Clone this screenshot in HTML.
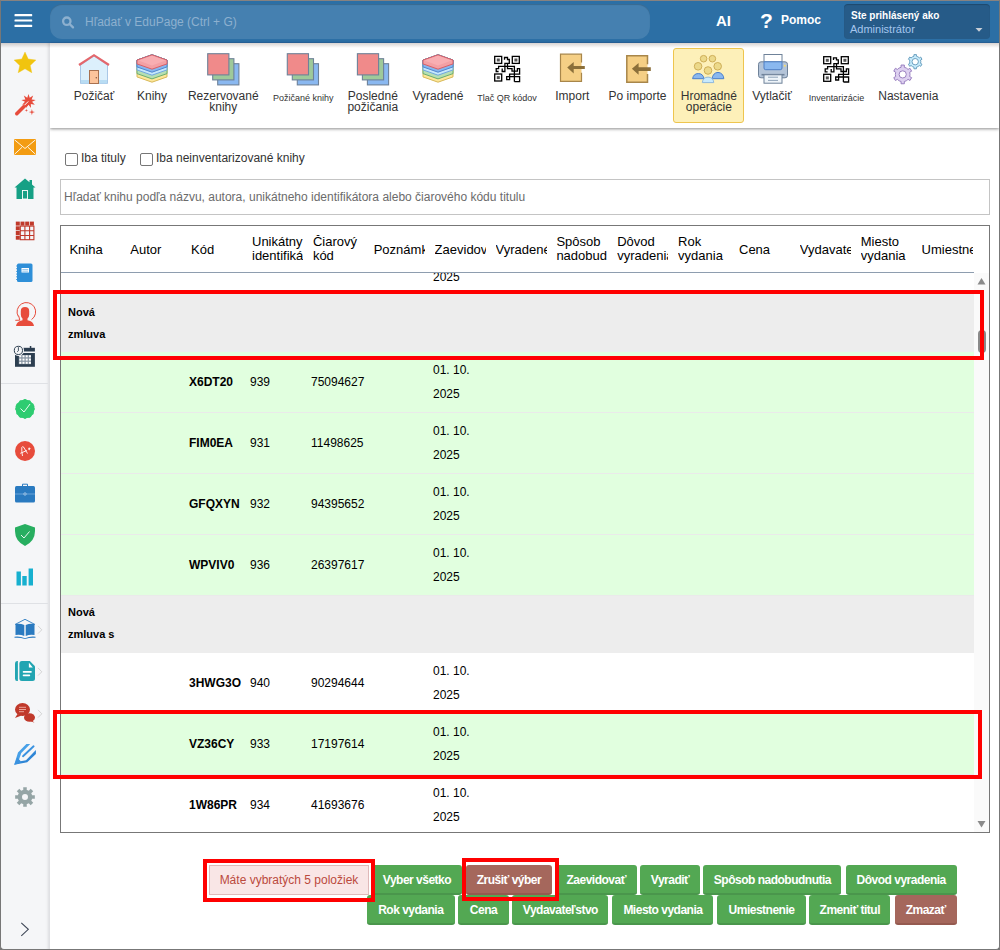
<!DOCTYPE html><html><head><meta charset="utf-8"><title>EduPage</title><style>
*{box-sizing:border-box}
html,body{margin:0;padding:0}
body{width:1000px;height:950px;overflow:hidden;position:relative;background:#fff;font-family:"Liberation Sans",sans-serif;color:#222}
.abs{position:absolute}
#frame{position:absolute;left:0;top:0;width:1000px;height:950px;border:1px solid #777;border-top-color:#878280;border-radius:0 0 4px 4px;z-index:50;pointer-events:none}
#hdr{position:absolute;left:0;top:0;width:1000px;height:43px;background:#2c6fa5;border-bottom:1px solid #2a67a0}
#srch{position:absolute;left:50px;top:4px;width:600px;height:35px;border-radius:12px;background:#4580b0;box-shadow:inset 0 1px 1px rgba(0,0,0,.18)}
#srch span{position:absolute;left:35px;top:11px;font-size:12px;color:#8db0cf;white-space:nowrap}
.hw{position:absolute;color:#fff;font-weight:bold;white-space:nowrap}
#user{position:absolute;left:844px;top:4px;width:146px;height:35px;border-radius:4px;background:#265b88;box-shadow:inset 0 1px 1px rgba(0,0,0,.2)}
#side{position:absolute;left:0;top:43px;width:50px;height:907px;background:#f5f6f8;box-shadow:inset -3px 0 3px -1px rgba(0,0,0,.10);z-index:5}
#sideedge{position:absolute;left:48px;top:43px;width:2px;height:907px;background:linear-gradient(90deg,#e6e7ea,#dedfe2);z-index:6}
.sep{position:absolute;left:1px;width:47px;height:1px;background:#dfe1e5;z-index:7}
#tb{position:absolute;left:50px;top:43px;width:949px;height:85px;background:#fff;box-shadow:0 1px 3px rgba(0,0,0,.45)}
#hdrsh{position:absolute;left:1px;top:43px;width:998px;height:5px;background:linear-gradient(rgba(60,40,30,.20),rgba(0,0,0,0));z-index:9}
.tl{position:absolute;top:91px;font-size:12px;line-height:11px;color:#333;text-align:center;white-space:nowrap}
.tls{position:absolute;top:92.5px;font-size:9px;line-height:10px;color:#333;text-align:center;white-space:nowrap}
#hl{position:absolute;left:673px;top:48px;width:71px;height:75px;background:#fdf0b9;border:1px solid #eec54e;border-radius:3px}
.cb{position:absolute;top:153px;width:13px;height:13px;border:1px solid #767676;border-radius:2px;background:#fff}
.cbl{position:absolute;top:151px;font-size:12px;color:#333;white-space:nowrap}
#inp{position:absolute;left:60px;top:179px;width:930px;height:36px;border:1px solid #c4c4c4;background:#fff}
#inp span{position:absolute;left:3px;top:10px;font-size:12px;color:#6b6b6b;white-space:nowrap}
#tbl{position:absolute;left:60px;top:225px;width:930px;height:608px;border:1px solid #777;background:#fff;overflow:hidden}
.th{position:absolute;font-size:13px;line-height:14px;color:#000;white-space:nowrap;overflow:hidden}
#thline{position:absolute;left:0;top:46px;width:913px;height:1px;background:#8e9daf}
#sb{position:absolute;left:913px;top:47px;width:15px;height:559px;background:#fafafa}
.row{position:absolute;left:0;width:913px}
.g{background:#ededed}
.gr{background:#e1ffdf}
.bd{border-bottom:1px solid #eaeaea}
.c{position:absolute;font-size:12px;color:#000;white-space:nowrap}
.b{font-weight:bold}
.rf{position:absolute;border:4px solid #ff0000;z-index:40}
.btn{position:absolute;height:30px;background:#53a853;border-bottom:2px solid #4a964c;border-radius:3px;color:#fff;font-weight:bold;font-size:12px;letter-spacing:-0.5px;line-height:30px;text-align:center;white-space:nowrap}
.br{background:#a5675c;border-bottom-color:#955a50}
#info{position:absolute;left:209px;top:865px;width:160px;height:30px;background:#f9e6e6;border:1px solid #dfb9b9;font-size:12px;line-height:28px;color:#bb4a3d;text-align:center;white-space:nowrap}
</style></head><body>
<div id="hdr"></div>
<div id="srch"><span>Hľadať v EduPage (Ctrl + G)</span></div>
<div class="hw" style="left:716px;top:12px;font-size:15px">AI</div>
<div class="hw" style="left:760px;top:9px;font-size:21px">?</div>
<div class="hw" style="left:781px;top:13px;font-size:12px">Pomoc</div>
<div id="user"></div>
<div class="hw" style="left:851px;top:10px;font-size:10px">Ste prihlásený ako</div>
<div class="hw" style="left:850px;top:23px;font-size:11px;font-weight:normal;color:#a5c6ee">Administrátor</div>
<div id="side"></div><div id="sideedge"></div>
<div class="sep" style="top:383px"></div><div class="sep" style="top:603px"></div>
<div id="tb"></div><div id="hdrsh"></div>
<div id="hl"></div>
<div class="tl" style="left:44px;width:100px">Požičať</div>
<div class="tl" style="left:102px;width:100px">Knihy</div>
<div class="tl" style="left:173.3px;width:100px">Rezervované<br>knihy</div>
<div class="tls" style="left:253.2px;width:100px">Požičané knihy</div>
<div class="tl" style="left:322.8px;width:100px">Posledné<br>požičania</div>
<div class="tl" style="left:388px;width:100px">Vyradené</div>
<div class="tls" style="left:457px;width:100px">Tlač QR kódov</div>
<div class="tl" style="left:522.3px;width:100px">Import</div>
<div class="tl" style="left:587.5px;width:100px">Po importe</div>
<div class="tl" style="left:658.8px;width:100px">Hromadné<br>operácie</div>
<div class="tl" style="left:722px;width:100px">Vytlačiť</div>
<div class="tls" style="left:786.5px;width:100px">Inventarizácie</div>
<div class="tl" style="left:858.3px;width:100px">Nastavenia</div>
<div class="cb" style="left:65px"></div><div class="cbl" style="left:81px">Iba tituly</div>
<div class="cb" style="left:140px"></div><div class="cbl" style="left:156px">Iba neinventarizované knihy</div>
<div id="inp"><span>Hľadať knihu podľa názvu, autora, unikátneho identifikátora alebo čiarového kódu titulu</span></div>
<div id="tbl">
<div class="th" style="left:8.4px;top:17px;width:51px">Kniha</div>
<div class="th" style="left:69.3px;top:17px;width:51px">Autor</div>
<div class="th" style="left:130.1px;top:17px;width:51px">Kód</div>
<div class="th" style="left:191.0px;top:9px;width:51px">Unikátny<br>identifikátor</div>
<div class="th" style="left:251.9px;top:9px;width:51px">Čiarový<br>kód</div>
<div class="th" style="left:312.7px;top:17px;width:51px">Poznámka</div>
<div class="th" style="left:373.6px;top:17px;width:51px">Zaevidované</div>
<div class="th" style="left:434.5px;top:17px;width:51px">Vyradené</div>
<div class="th" style="left:495.4px;top:9px;width:51px">Spôsob<br>nadobudnutia</div>
<div class="th" style="left:556.2px;top:9px;width:51px">Dôvod<br>vyradenia</div>
<div class="th" style="left:617.1px;top:9px;width:51px">Rok<br>vydania</div>
<div class="th" style="left:678.0px;top:17px;width:51px">Cena</div>
<div class="th" style="left:738.8px;top:17px;width:51px">Vydavateľstvo</div>
<div class="th" style="left:799.7px;top:9px;width:51px">Miesto<br>vydania</div>
<div class="th" style="left:860.6px;top:17px;width:51px">Umiestnenie</div>
<div id="thline"></div>
<div style="position:absolute;left:0;top:47px;width:913px;height:559px;overflow:hidden">
<div class="row" style="top:0px;height:21px"></div>
<div class="c" style="left:372px;top:-3px;line-height:14px">2025</div>
<div class="row g" style="top:21px;height:58px"></div>
<div class="c b" style="left:7px;top:28px;line-height:22px;font-size:11px">Nová<br>zmluva</div>
<div class="row gr bd" style="top:79px;height:61px"></div>
<div class="c b" style="left:128px;top:101px;line-height:16px">X6DT20</div>
<div class="c" style="left:189px;top:101px;line-height:16px">939</div>
<div class="c" style="left:250px;top:101px;line-height:16px">75094627</div>
<div class="c" style="left:372px;top:85px;line-height:24px">01. 10.<br>2025</div>
<div class="row gr bd" style="top:140px;height:61px"></div>
<div class="c b" style="left:128px;top:162px;line-height:16px">FIM0EA</div>
<div class="c" style="left:189px;top:162px;line-height:16px">931</div>
<div class="c" style="left:250px;top:162px;line-height:16px">11498625</div>
<div class="c" style="left:372px;top:146px;line-height:24px">01. 10.<br>2025</div>
<div class="row gr bd" style="top:201px;height:61px"></div>
<div class="c b" style="left:128px;top:223px;line-height:16px">GFQXYN</div>
<div class="c" style="left:189px;top:223px;line-height:16px">932</div>
<div class="c" style="left:250px;top:223px;line-height:16px">94395652</div>
<div class="c" style="left:372px;top:207px;line-height:24px">01. 10.<br>2025</div>
<div class="row gr bd" style="top:262px;height:61px"></div>
<div class="c b" style="left:128px;top:284px;line-height:16px">WPVIV0</div>
<div class="c" style="left:189px;top:284px;line-height:16px">936</div>
<div class="c" style="left:250px;top:284px;line-height:16px">26397617</div>
<div class="c" style="left:372px;top:268px;line-height:24px">01. 10.<br>2025</div>
<div class="row g" style="top:323px;height:57px"></div>
<div class="c b" style="left:7px;top:328px;line-height:22px;font-size:11px">Nová<br>zmluva s</div>
<div class="row  bd" style="top:380px;height:61px"></div>
<div class="c b" style="left:128px;top:402px;line-height:16px">3HWG3O</div>
<div class="c" style="left:189px;top:402px;line-height:16px">940</div>
<div class="c" style="left:250px;top:402px;line-height:16px">90294644</div>
<div class="c" style="left:372px;top:386px;line-height:24px">01. 10.<br>2025</div>
<div class="row gr bd" style="top:441px;height:61px"></div>
<div class="c b" style="left:128px;top:463px;line-height:16px">VZ36CY</div>
<div class="c" style="left:189px;top:463px;line-height:16px">933</div>
<div class="c" style="left:250px;top:463px;line-height:16px">17197614</div>
<div class="c" style="left:372px;top:447px;line-height:24px">01. 10.<br>2025</div>
<div class="row  bd" style="top:502px;height:61px"></div>
<div class="c b" style="left:128px;top:524px;line-height:16px">1W86PR</div>
<div class="c" style="left:189px;top:524px;line-height:16px">934</div>
<div class="c" style="left:250px;top:524px;line-height:16px">41693676</div>
<div class="c" style="left:372px;top:508px;line-height:24px">01. 10.<br>2025</div>
</div>
<div id="sb"></div>
<svg class="abs" style="left:913px;top:47px" width="15" height="559"><path d="M3.5 11.5 L7.5 5 L11.5 11.5Z" fill="#8a8a8a"/><rect x="4" y="57" width="8" height="23" rx="4" fill="#8a8a8a"/><path d="M3.5 548 L11.5 548 L7.5 554.5Z" fill="#8a8a8a"/></svg>
</div>
<div class="rf" style="left:53px;top:290px;width:931px;height:70px"></div>
<div class="rf" style="left:53px;top:710px;width:929px;height:69px"></div>
<div id="info">Máte vybratých 5 položiek</div>
<div class="btn " style="left:372.0px;top:865px;width:90.0px">Vyber všetko</div>
<div class="btn br" style="left:466.0px;top:865px;width:86.0px">Zrušiť výber</div>
<div class="btn " style="left:556.0px;top:865px;width:80.5px">Zaevidovať</div>
<div class="btn " style="left:640.3px;top:865px;width:59.6px">Vyradiť</div>
<div class="btn " style="left:703.4px;top:865px;width:138.0px">Spôsob nadobudnutia</div>
<div class="btn " style="left:845.6px;top:865px;width:111.2px">Dôvod vyradenia</div>
<div class="btn " style="left:367.0px;top:895px;width:87.6px">Rok vydania</div>
<div class="btn " style="left:458.0px;top:895px;width:51.0px">Cena</div>
<div class="btn " style="left:512.4px;top:895px;width:96.0px">Vydavateľstvo</div>
<div class="btn " style="left:612.4px;top:895px;width:101.0px">Miesto vydania</div>
<div class="btn " style="left:717.4px;top:895px;width:88.2px">Umiestnenie</div>
<div class="btn " style="left:809.2px;top:895px;width:81.2px">Zmeniť titul</div>
<div class="btn br" style="left:894.6px;top:895px;width:62.2px">Zmazať</div>
<div class="rf" style="left:203px;top:859px;width:172px;height:43px"></div>
<div class="rf" style="left:462px;top:858px;width:97px;height:43px"></div>
<svg class="abs" style="left:0;top:0;z-index:30;pointer-events:none" width="1000" height="950" viewBox="0 0 1000 950"><g fill="#fff"><rect x="14.5" y="14.1" width="17.7" height="2.2" rx="0.6"/><rect x="14.5" y="19.4" width="17.7" height="2.2" rx="0.6"/><rect x="14.5" y="24.8" width="17.7" height="2.2" rx="0.6"/></g><g stroke="#8db0cf" fill="none" stroke-width="2.3"><circle cx="66.8" cy="21.2" r="3.7"/><path d="M69.6 24 L73 27.4" stroke-linecap="round"/></g><path d="M975.5 28 L982.5 28 L979 31.8Z" fill="#c9cfd6"/><g><path d="M80.5 65 L94 56 L107.5 65 L107.5 83.5 L80.5 83.5Z" fill="#dcf0fc" stroke="#a9c7e6" stroke-width="1"/><rect x="81" y="80" width="26" height="3.5" fill="#b8dcf3"/><path d="M79 65 L94 55.2 L109 65" fill="none" stroke="#e4676c" stroke-width="2.2"/><rect x="89.5" y="70.5" width="9" height="13" fill="#fcc49b" stroke="#a8714f" stroke-width="1"/><circle cx="96.3" cy="77.7" r="0.7" fill="#7a5038"/></g><path d="M137 60.099999999999994 L152 54.8 L167 60.099999999999994 L167 76.9 L152 82.2 L137 76.9Z" fill="#fde79a" stroke="#d8b95a" stroke-width="1"/><path d="M137 60.099999999999994 L152 54.8 L167 60.099999999999994 L167 73.6 L152 78.89999999999999 L137 73.6Z" fill="#b6dfb2" stroke="#6aaf70" stroke-width="1"/><path d="M137 60.099999999999994 L152 54.8 L167 60.099999999999994 L167 69.9 L152 75.2 L137 69.9Z" fill="#c6e8fc" stroke="#6fa6df" stroke-width="1"/><path d="M137 60.099999999999994 L152 54.8 L167 60.099999999999994 L167 66.9 L152 72.2 L137 66.9Z" fill="#85b7f0" stroke="#5186d0" stroke-width="1"/><path d="M137 60.099999999999994 L152 54.8 L167 60.099999999999994 L167 63.9 L152 69.2 L137 63.9Z" fill="#f3a0a4" stroke="#d85e66" stroke-width="1"/><path d="M138.5 60.4 L152 55.8 L165.5 60.4 L152 65.6Z" fill="#f8aeb2"/><path d="M423 60.099999999999994 L438 54.8 L453 60.099999999999994 L453 76.9 L438 82.2 L423 76.9Z" fill="#fde79a" stroke="#d8b95a" stroke-width="1"/><path d="M423 60.099999999999994 L438 54.8 L453 60.099999999999994 L453 73.6 L438 78.89999999999999 L423 73.6Z" fill="#b6dfb2" stroke="#6aaf70" stroke-width="1"/><path d="M423 60.099999999999994 L438 54.8 L453 60.099999999999994 L453 69.9 L438 75.2 L423 69.9Z" fill="#c6e8fc" stroke="#6fa6df" stroke-width="1"/><path d="M423 60.099999999999994 L438 54.8 L453 60.099999999999994 L453 66.9 L438 72.2 L423 66.9Z" fill="#85b7f0" stroke="#5186d0" stroke-width="1"/><path d="M423 60.099999999999994 L438 54.8 L453 60.099999999999994 L453 63.9 L438 69.2 L423 63.9Z" fill="#f3a0a4" stroke="#d85e66" stroke-width="1"/><path d="M424.5 60.4 L438 55.8 L451.5 60.4 L438 65.6Z" fill="#f8aeb2"/><rect x="217.7" y="63.7" width="21.2" height="21.2" fill="#8ab8f0" stroke="#6e8299" stroke-width="1.1"/><rect x="212.7" y="58.7" width="21.2" height="21.2" fill="#9ec99a" stroke="#6e8299" stroke-width="1.1"/><rect x="207.7" y="53.7" width="21.2" height="21.2" fill="#f08a8a" stroke="#6e8299" stroke-width="1.1"/><rect x="297.3" y="63.7" width="21.2" height="21.2" fill="#8ab8f0" stroke="#6e8299" stroke-width="1.1"/><rect x="292.3" y="58.7" width="21.2" height="21.2" fill="#9ec99a" stroke="#6e8299" stroke-width="1.1"/><rect x="287.3" y="53.7" width="21.2" height="21.2" fill="#f08a8a" stroke="#6e8299" stroke-width="1.1"/><rect x="367.4" y="63.7" width="21.2" height="21.2" fill="#8ab8f0" stroke="#6e8299" stroke-width="1.1"/><rect x="362.4" y="58.7" width="21.2" height="21.2" fill="#9ec99a" stroke="#6e8299" stroke-width="1.1"/><rect x="357.4" y="53.7" width="21.2" height="21.2" fill="#f08a8a" stroke="#6e8299" stroke-width="1.1"/><g transform="translate(494,55.7)"><g fill="none" stroke="#000" stroke-width="1.3"><rect x="0.7" y="0.7" width="7" height="7"/><rect x="18.3" y="0.7" width="7" height="7"/><rect x="0.7" y="18.3" width="7" height="7"/><path d="M10.5 4 V1.8 H13.5 V3.8 H15.3 V7.7 H10.9 V15.8 H8.2 V12.9"/><path d="M4.6 15.8 H2.2 V12.9 H4.6 V10.7 H20.4 V26"/><path d="M13.5 7.7 V12.9 H18 V15.5 H23.4 V12.9 H25.6 V18.4 H15.6 V24 H12.7 V21 H25.6 V26 H20.4"/></g><g fill="#555"><rect x="2.8" y="2.8" width="3" height="3"/><rect x="20.4" y="2.8" width="3" height="3"/><rect x="2.8" y="20.4" width="3" height="3"/></g></g><g transform="translate(823,56)"><g fill="none" stroke="#000" stroke-width="1.3"><rect x="0.7" y="0.7" width="7" height="7"/><rect x="18.3" y="0.7" width="7" height="7"/><rect x="0.7" y="18.3" width="7" height="7"/><path d="M10.5 4 V1.8 H13.5 V3.8 H15.3 V7.7 H10.9 V15.8 H8.2 V12.9"/><path d="M4.6 15.8 H2.2 V12.9 H4.6 V10.7 H20.4 V26"/><path d="M13.5 7.7 V12.9 H18 V15.5 H23.4 V12.9 H25.6 V18.4 H15.6 V24 H12.7 V21 H25.6 V26 H20.4"/></g><g fill="#555"><rect x="2.8" y="2.8" width="3" height="3"/><rect x="20.4" y="2.8" width="3" height="3"/><rect x="2.8" y="20.4" width="3" height="3"/></g></g><g><path d="M581.5 62.5 V54.2 H560.5 V81.4 H581.5 V72.8" fill="#f5cf85" stroke="#a8864a" stroke-width="1.2"/><path d="M567.2 67.6 L573.7 61.9 L573.7 66.1 H584.8 V69 H573.7 L573.7 73.5Z" fill="#8b6f3a"/></g><g><path d="M647.5 64.2 V55.8 H626.8 V82.2 H647.5 V74.1" fill="#f5cf85" stroke="#a8864a" stroke-width="1.5"/><path d="M631.9 68.8 L638.6 63 L638.6 67.2 H650.8 V71 H638.6 L638.6 74.7Z" fill="#8b6f3a"/></g><g stroke="#c9a850" stroke-width="0.9" fill="#ecd98a"><circle cx="703.6" cy="58.7" r="3.3"/><circle cx="712.4" cy="58.7" r="3.3"/><circle cx="698.1" cy="66.3" r="3.8"/><circle cx="717.7" cy="66.3" r="3.8"/><circle cx="708" cy="70.5" r="3.8"/></g><g stroke-width="1"><path d="M692.6 78.7 A5.8 6.3 0 0 1 704 78.7Z" fill="#8ab8ef" stroke="#4a7fcc"/><path d="M712.2 78.7 A5.8 6.3 0 0 1 723.8 78.7Z" fill="#8ab8ef" stroke="#4a7fcc"/><path d="M702.3 82.6 A5.8 6.3 0 0 1 713.8 82.6Z" fill="#c8eafe" stroke="#8fb8dd"/></g><g stroke="#6f8299" stroke-width="1"><rect x="764" y="54.5" width="18" height="8" fill="#fff"/><rect x="758.5" y="61.8" width="29" height="16" rx="2.5" fill="#b4c4d8"/><path d="M764 61.8 H782 V68 Q782 69.7 780.3 69.7 H765.7 Q764 69.7 764 68Z" fill="#8ab8ef" stroke="#4f7fc4"/><path d="M761.5 74.7 H784.5" stroke-width="1.6"/><rect x="764" y="74.8" width="18" height="8.4" fill="#eef4f9"/><path d="M768 77.2 H778 M768 80.4 H778" stroke="#8fa3b8" stroke-width="1"/></g><circle cx="784.8" cy="65.7" r="1" fill="#f5dc6a"/><path d="M899.20 67.99 L901.11 67.28 L901.04 65.05 L904.36 65.05 L904.29 67.28 L906.20 67.99 L906.50 68.17 L908.07 69.46 L909.97 68.28 L911.63 71.16 L909.67 72.22 L910.00 74.23 L910.00 74.57 L909.67 76.58 L911.63 77.64 L909.97 80.52 L908.07 79.34 L906.50 80.63 L906.20 80.81 L904.29 81.52 L904.36 83.75 L901.04 83.75 L901.11 81.52 L899.20 80.81 L898.90 80.63 L897.33 79.34 L895.43 80.52 L893.77 77.64 L895.73 76.58 L895.40 74.57 L895.40 74.23 L895.73 72.22 L893.77 71.16 L895.43 68.28 L897.33 69.46 L898.90 68.17Z M906.3000000000001 74.4 A3.6 3.6 0 1 0 899.1 74.4 A3.6 3.6 0 1 0 906.3000000000001 74.4Z" fill="#ddd0f0" stroke="#9a80c0" stroke-width="1" fill-rule="evenodd"/><path d="M912.52 56.79 L913.98 56.23 L913.94 54.61 L916.46 54.61 L916.42 56.23 L917.88 56.79 L918.11 56.92 L919.32 57.91 L920.71 57.06 L921.97 59.25 L920.54 60.03 L920.80 61.57 L920.80 61.83 L920.54 63.37 L921.97 64.15 L920.71 66.34 L919.32 65.49 L918.11 66.48 L917.88 66.61 L916.42 67.17 L916.46 68.79 L913.94 68.79 L913.98 67.17 L912.52 66.61 L912.29 66.48 L911.08 65.49 L909.69 66.34 L908.43 64.15 L909.86 63.37 L909.60 61.83 L909.60 61.57 L909.86 60.03 L908.43 59.25 L909.69 57.06 L911.08 57.91 L912.29 56.92Z M918.4000000000001 61.7 A3.2 3.2 0 1 0 912.0 61.7 A3.2 3.2 0 1 0 918.4000000000001 61.7Z" fill="#c8ecfc" stroke="#6aa0c0" stroke-width="1" fill-rule="evenodd"/><path d="M25 52.1 L28.2 59 L35.9 60.1 L30.2 65.5 L31.8 72.7 L25 68.8 L18.2 72.7 L19.8 65.5 L14.1 60.1 L21.8 59Z" fill="#f1c40f" stroke="#f1c40f" stroke-width="0.4" stroke-linejoin="round"/><g fill="#e74c3c"><path d="M28.50 93.90 L29.73 97.82 L33.19 95.61 L31.62 99.40 L35.69 99.93 L32.05 101.83 L34.82 104.85 L30.81 103.96 L31.00 108.06 L28.50 104.80 L26.00 108.06 L26.19 103.96 L22.18 104.85 L24.95 101.83 L21.31 99.93 L25.38 99.40 L23.81 95.61 L27.27 97.82Z"/><path d="M15.5 112.5 L27 101 L29.5 103.5 L18 115 Q16.7 116.2 15.5 115 Q14.3 113.8 15.5 112.5Z"/><path d="M26.40 108.70 L26.75 110.05 L28.10 110.40 L26.75 110.75 L26.40 112.10 L26.05 110.75 L24.70 110.40 L26.05 110.05Z"/><path d="M31.90 109.00 L32.54 111.46 L35.00 112.10 L32.54 112.74 L31.90 115.20 L31.26 112.74 L28.80 112.10 L31.26 111.46Z"/></g><path d="M24.8 104.9 L28 101.7" stroke="#fff" stroke-width="1" stroke-linecap="round"/><g><rect x="14" y="139" width="22" height="16" fill="#f39c12"/><path d="M14.5 139.8 L25 148.5 L35.5 139.8 M14.5 154.3 L22 147.3 M35.5 154.3 L28 147.3" stroke="#fff" stroke-width="0.9" fill="none"/></g><g fill="#16a085"><path d="M14.5 187.5 L25 178.5 L29.5 182.3 V180 H32 V184.5 L35.5 187.5 H33.5 V199 H16.5 V187.5Z"/></g><rect x="22.5" y="190.5" width="5" height="8.5" fill="none" stroke="#fff" stroke-width="0.9"/><g fill="#c0392b"><rect x="15.8" y="221.6" width="4" height="4"/><rect x="15.8" y="226.3" width="4" height="4"/><rect x="15.8" y="231.0" width="4" height="4"/><rect x="15.8" y="235.7" width="4" height="4"/><rect x="20.5" y="221.6" width="4" height="4"/><rect x="25.2" y="221.6" width="4" height="4"/><rect x="29.9" y="221.6" width="4" height="4"/></g><g fill="none" stroke="#c0392b" stroke-width="1.1"><rect x="20.3" y="226.1" width="13.6" height="13.6"/><path d="M24.9 226 V240 M29.6 226 V240 M20 230.8 H34 M20 235.5 H34"/></g><g><rect x="17" y="263.5" width="15.5" height="18.5" rx="1.5" fill="#2e8fd8"/><rect x="21.5" y="268" width="7.5" height="4.5" fill="#fff"/><path d="M22.3 269.6 H28.2 M22.3 271.2 H28.2" stroke="#2e8fd8" stroke-width="0.5"/><path d="M16 266 H18 M16 268.7 H18 M16 271.4 H18 M16 274.1 H18 M16 276.8 H18 M16 279.5 H18" stroke="#2e8fd8" stroke-width="0.8"/></g><g fill="#e74c3c"><path d="M20.8 311 Q20.8 307 25 307 Q29.2 307 29.2 311 V314.5 Q29.2 317 27.5 318.5 V320.3 Q33.5 321.5 34 326 H16 Q16.5 321.5 22.5 320.3 V318.5 Q20.8 317 20.8 314.5Z"/></g><path d="M18.3 316.5 A9.3 9.3 0 1 1 31.5 319.6" fill="none" stroke="#e74c3c" stroke-width="1"/><path d="M15.3 320.3 L19.8 320.2 L18.6 315.6" fill="none" stroke="#e74c3c" stroke-width="1"/><g><rect x="23.3" y="347.8" width="11.6" height="3.7" fill="#2c3e50"/><rect x="29.8" y="346" width="1.5" height="3.5" fill="#2c3e50"/><path d="M15 353 H34.9 V366.8 H15Z" fill="#2c3e50"/><rect x="18.8" y="355" width="12.2" height="9.2" fill="#8794a2"/><rect x="19.3" y="355.3" width="2" height="2" fill="#fff"/><rect x="19.3" y="358.6" width="2" height="2" fill="#fff"/><rect x="19.3" y="361.8" width="2" height="2" fill="#fff"/><rect x="22.5" y="355.3" width="2" height="2" fill="#fff"/><rect x="22.5" y="358.6" width="2" height="2" fill="#fff"/><rect x="22.5" y="361.8" width="2" height="2" fill="#fff"/><rect x="25.7" y="355.3" width="2" height="2" fill="#fff"/><rect x="25.7" y="358.6" width="2" height="2" fill="#fff"/><rect x="25.7" y="361.8" width="2" height="2" fill="#fff"/><rect x="28.9" y="355.3" width="2" height="2" fill="#fff"/><rect x="28.9" y="358.6" width="2" height="2" fill="#fff"/><rect x="28.9" y="361.8" width="2" height="2" fill="#fff"/><circle cx="18.4" cy="350.4" r="5.6" fill="#f5f6f8"/><circle cx="18.4" cy="350.4" r="4.1" fill="none" stroke="#2c3e50" stroke-width="1"/><path d="M18.4 347.2 V350.8 L17.2 351.8" stroke="#2c3e50" stroke-width="0.9" fill="none"/></g><path d="M25.00 399.00 L30.41 401.56 L34.51 405.91 L33.75 411.84 L30.88 417.09 L25.00 418.20 L19.12 417.09 L16.25 411.84 L15.49 405.91 L19.59 401.56Z" fill="#2ecc71"/><path d="M35.00 409.00 L33.79 411.36 L33.66 414.00 L31.43 415.43 L30.00 417.66 L27.36 417.79 L25.00 419.00 L22.64 417.79 L20.00 417.66 L18.57 415.43 L16.34 414.00 L16.21 411.36 L15.00 409.00 L16.21 406.64 L16.34 404.00 L18.57 402.57 L20.00 400.34 L22.64 400.21 L25.00 399.00 L27.36 400.21 L30.00 400.34 L31.43 402.57 L33.66 404.00 L33.79 406.64Z" fill="#2ecc71"/><path d="M20.5 408.5 L24 412 L30 404" fill="none" stroke="#fff" stroke-width="0.9"/><circle cx="25" cy="451" r="10" fill="#e74c3c"/><path d="M22.5 456 Q21.5 451 21.8 447.5 Q22.5 446 23.5 447 L27.5 453.5 M20.3 453.3 L26.8 450.5" fill="none" stroke="#fff" stroke-width="0.9"/><path d="M29.3 447 L29.7 448.3 L31 448.5 L29.9 449.2 L30 450.6 L29.2 449.6 L28 450 L28.6 448.9 L28 447.8 L29 448Z" fill="#fff"/><g><rect x="15" y="486" width="20" height="16.5" rx="1.5" fill="#2a7ac0"/><path d="M22.5 486 V484.2 H27.5 V486" fill="none" stroke="#2a7ac0" stroke-width="1"/><path d="M15 494 H35" stroke="#6fa8dc" stroke-width="0.9"/><circle cx="25" cy="494" r="1.2" fill="#2a7ac0" stroke="#bcd6ee" stroke-width="0.8"/></g><path d="M25 524 L35 527.5 V531 Q35 541 25 546 Q15 541 15 531 V527.5Z" fill="#27ae60"/><path d="M21 535 L24 538 L29.5 531.5" fill="none" stroke="#fff" stroke-width="0.9"/><g fill="#17b0cf"><rect x="16.5" y="571.5" width="4.4" height="14"/><rect x="22.3" y="576" width="4.4" height="9.5"/><rect x="28.6" y="568.5" width="4.4" height="17"/></g><g fill="#2a7ac0"><path d="M15 624.5 L25 619.3 L35 624.5" fill="none" stroke="#2a7ac0" stroke-width="0.9"/><path d="M15.5 624 Q20 623 24.3 625 V636 Q20 634 15.5 635Z"/><path d="M34.5 624 Q30 623 25.7 625 V636 Q30 634 34.5 635Z"/><path d="M14.5 636.7 Q20 636 25 638.2 Q30 636 35.5 636.7 V637.8 Q30 637.3 25 639 Q20 637.3 14.5 637.8Z"/></g><path d="M38 625.9 L41.8 629.8 L38 633.6" fill="none" stroke="#cfcfcf" stroke-width="0.9"/><g fill="#22a5b2"><path d="M17.9 661 V681 H17 Q15 681 15 678.5 V663.5 Q15 661 17 661Z"/><path d="M19.4 663.5 Q19.4 661 21.9 661 H29.8 L35 666.3 V678.5 Q35 681 32.5 681 H21.9 Q19.4 681 19.4 678.5Z"/></g><path d="M28.9 662.8 V667.4 H32.8Z" fill="#fff"/><path d="M23.5 671.9 H31 M23.5 675.4 H29.4" stroke="#fff" stroke-width="1.6" stroke-linecap="round"/><path d="M38 667.9 L41.8 671.8 L38 675.6" fill="none" stroke="#cfcfcf" stroke-width="0.9"/><g fill="#c0392b"><ellipse cx="29.5" cy="717.5" rx="5.5" ry="4.3"/><path d="M25 719 L34.5 722.8 L31 719.5Z"/><ellipse cx="22.5" cy="709.5" rx="7.5" ry="6.5"/><path d="M17.5 714 L15 718 L21.5 715.5Z"/></g><path d="M19 707.3 H26 M19 709.5 H26 M19 711.7 H24" stroke="#f0b0a8" stroke-width="0.9"/><path d="M38 709.9 L41.8 713.8 L38 717.6" fill="none" stroke="#cfcfcf" stroke-width="0.9"/><g fill="#3a92e0"><path d="M14.2 764.8 L18 752.4 L26.4 744.1 L30.2 744.1 L21.3 753 L19.3 758.8Z" fill="#47a0e8"/><path d="M26 760.2 L35.9 749.9 L35.9 753.9 L27.2 762.3 L14.2 764.8 L20.6 761.2Z" fill="#2f86d6"/><path d="M14.1 765 L17.2 757.2 L21.6 762.2Z" fill="#3a92e0"/></g><path d="M23 756.2 L33.6 746.3" stroke="#3a92e0" stroke-width="1.9" stroke-linecap="round"/><path d="M31.75 794.22 L32.09 795.26 L34.84 795.21 L34.84 798.79 L32.09 798.74 L31.75 799.78 L31.74 799.81 L31.24 800.79 L33.22 802.69 L30.69 805.22 L28.79 803.24 L27.81 803.74 L27.78 803.75 L26.74 804.09 L26.79 806.84 L23.21 806.84 L23.26 804.09 L22.22 803.75 L22.19 803.74 L21.21 803.24 L19.31 805.22 L16.78 802.69 L18.76 800.79 L18.26 799.81 L18.25 799.78 L17.91 798.74 L15.16 798.79 L15.16 795.21 L17.91 795.26 L18.25 794.22 L18.26 794.19 L18.76 793.21 L16.78 791.31 L19.31 788.78 L21.21 790.76 L22.19 790.26 L22.22 790.25 L23.26 789.91 L23.21 787.16 L26.79 787.16 L26.74 789.91 L27.78 790.25 L27.81 790.26 L28.79 790.76 L30.69 788.78 L33.22 791.31 L31.24 793.21 L31.74 794.19Z M28 797 A3 3 0 1 0 22 797 A3 3 0 1 0 28 797Z" fill="#95a5a6" fill-rule="evenodd"/><path d="M21.3 922.8 L28.3 929.3 L21.3 935.8" fill="none" stroke="#3d4656" stroke-width="1.1"/></svg>
<div id="frame"></div><svg class="abs" style="left:0;top:0;z-index:51" width="1000" height="950"><path d="M0 945 V950 H5 A5 5 0 0 1 0 945Z M1000 945 V950 H995 A5 5 0 0 0 1000 945Z" fill="#777"/></svg>
</body></html>
